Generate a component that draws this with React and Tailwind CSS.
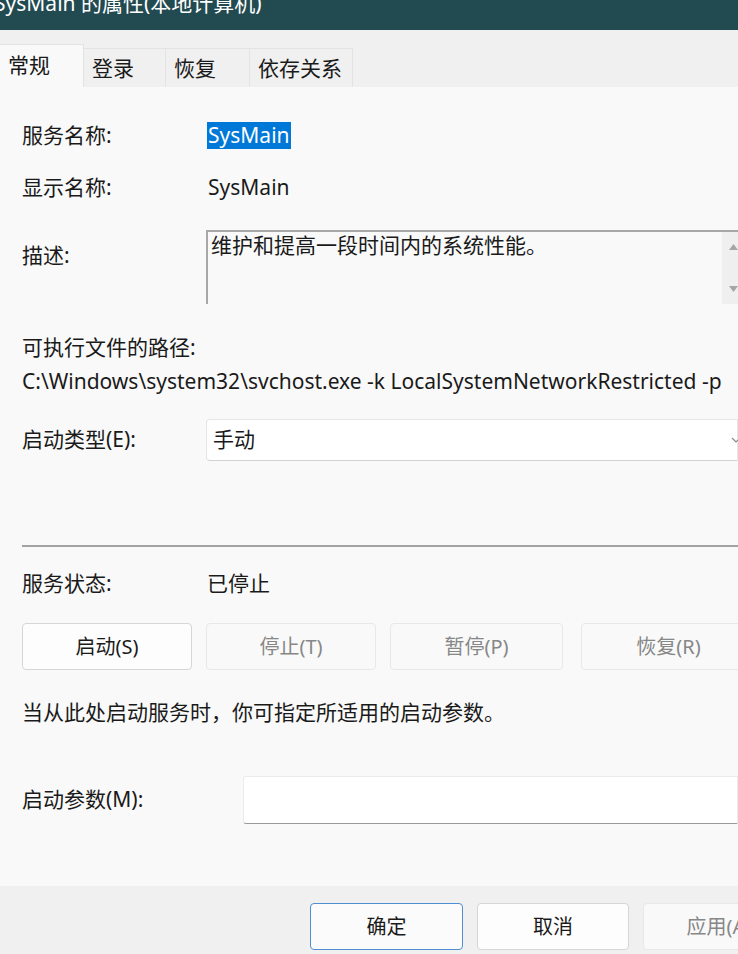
import React from 'react';

const FONT = '"Noto Sans", "Noto Sans CJK SC", sans-serif';

function Tab({ label, active, width }) {
  if (active) {
    return (
      <div className="h-[43px] bg-[#f9f9f9] border-t border-r border-[#e3e3e3] pl-[8px] pt-[5px] text-[21px] leading-[30px] text-[#1a1a1a]" style={{ width }}>
        {label}
      </div>
    );
  }
  return (
    <div className="h-[39px] bg-[#f0f0f0] border-t border-r border-[#e3e3e3] pl-[8px] pt-[4px] text-[21px] leading-[30px] text-[#1a1a1a]" style={{ width }}>
      {label}
    </div>
  );
}

function Row({ label, children, className = '' }) {
  return (
    <div className={`flex items-center h-[27px] ${className}`}>
      <div className="w-[185px] shrink-0">{label}</div>
      {children}
    </div>
  );
}

function Button({ children, disabled, primary, className = '' }) {
  return (
    <div
      className={`flex items-center justify-center h-[47px] rounded-[4px] border text-[20px] ${
        disabled
          ? 'bg-[#f9f9f9] border-[#e8e8e8] text-[#878787]'
          : primary
          ? 'bg-[#fbfbfb] border-[#4f8fd1] text-[#1a1a1a]'
          : 'bg-[#fdfdfd] border-[#d6d6d6] text-[#1a1a1a]'
      } ${className}`}
    >
      {children}
    </div>
  );
}

export default function App() {
  return (
    <div className="w-[738px] h-[954px] overflow-hidden flex flex-col bg-[#f0f0f0] text-[#1a1a1a]" style={{ fontFamily: FONT }}>
      {/* title bar */}
      <div className="h-[30px] bg-[#224a51] overflow-hidden shrink-0">
        <div className="text-white text-[21px] leading-[22px] -mt-[8px] -ml-[6px] whitespace-nowrap">
          SysMain 的属性(本地计算机)
        </div>
      </div>

      {/* tabs */}
      <div className="h-[57px] flex items-end shrink-0">
        <Tab label="常规" active width={84} />
        <Tab label="登录" width={82} />
        <Tab label="恢复" width={84} />
        <Tab label="依存关系" width={103} />
      </div>

      {/* general page */}
      <div className="flex-1 bg-[#f9f9f9] pl-[22px] pt-[35px] text-[21px]">
        <Row label="服务名称:">
          <span className="bg-[#0078d7] text-white px-[1px] h-[27px] leading-[27px]">SysMain</span>
        </Row>
        <Row label="显示名称:" className="mt-[25px]">
          <span className="pl-[1px]">SysMain</span>
        </Row>

        <div className="flex mt-[29px] h-[74px]">
          <div className="w-[184px] shrink-0 pt-[12px] leading-[27px]">描述:</div>
          <div className="flex-1 flex bg-[#f9f9f9] border-t-2 border-l-2 border-[#a8a8a8]">
            <div className="flex-1 pl-[3px] pt-[0px] leading-[27px]">维护和提高一段时间内的系统性能。</div>
            <div className="w-[16px] bg-[#efefef] flex flex-col items-end justify-between py-[12px]">
              <svg width="9" height="6" viewBox="0 0 9 6"><path d="M0 6 L4.5 0 L9 6 Z" fill="#a6a6a6" /></svg>
              <svg width="9" height="6" viewBox="0 0 9 6"><path d="M0 0 L4.5 6 L9 0 Z" fill="#a6a6a6" /></svg>
            </div>
          </div>
        </div>

        <div className="h-[27px] leading-[27px] mt-[30px]">可执行文件的路径:</div>
        <div className="h-[27px] leading-[27px] mt-[7px] whitespace-nowrap">
          C:\Windows\system32\svchost.exe -k LocalSystemNetworkRestricted -p
        </div>

        <div className="flex items-center mt-[24px] h-[42px]">
          <div className="w-[184px] shrink-0">启动类型(E):</div>
          <div className="flex-1 h-[42px] bg-white border border-[#e6e6e6] border-b-[#d2d2d2] rounded-l-[4px] flex items-center justify-between pl-[6px]">
            <span>手动</span>
            <svg width="10" height="6" viewBox="0 0 10 6" className="mr-[-4px]">
              <path d="M1 1 L5 5 L9 1" stroke="#8a8a8a" strokeWidth="1.2" fill="none" />
            </svg>
          </div>
        </div>

        <div className="mt-[84px] h-[2px] bg-[#a3a3a3]" />

        <Row label="服务状态:" className="mt-[23px]">
          <span>已停止</span>
        </Row>

        <div className="flex mt-[26px] gap-[14px] -mr-[40px]">
          <Button className="w-[170px]">启动(S)</Button>
          <Button disabled className="w-[170px]">停止(T)</Button>
          <Button disabled className="w-[173px]">暂停(P)</Button>
          <Button disabled className="w-[175px] ml-[4px]">恢复(R)</Button>
        </div>

        <div className="h-[27px] leading-[27px] mt-[29px]">当从此处启动服务时，你可指定所适用的启动参数。</div>

        <div className="flex items-center mt-[50px] h-[48px]">
          <div className="w-[221px] shrink-0">启动参数(M):</div>
          <div className="flex-1 h-[48px] bg-white border border-[#ebebeb] border-b-[#9a9a9a] rounded-l-[3px]" />
        </div>
      </div>

      {/* footer */}
      <div className="h-[68px] shrink-0 bg-[#f0f0f0] flex items-start pt-[17px] pl-[310px] gap-[14px]">
        <Button primary className="w-[153px] shrink-0">确定</Button>
        <Button className="w-[152px] shrink-0">取消</Button>
        <Button disabled className="w-[152px] shrink-0">应用(A)</Button>
      </div>
    </div>
  );
}
